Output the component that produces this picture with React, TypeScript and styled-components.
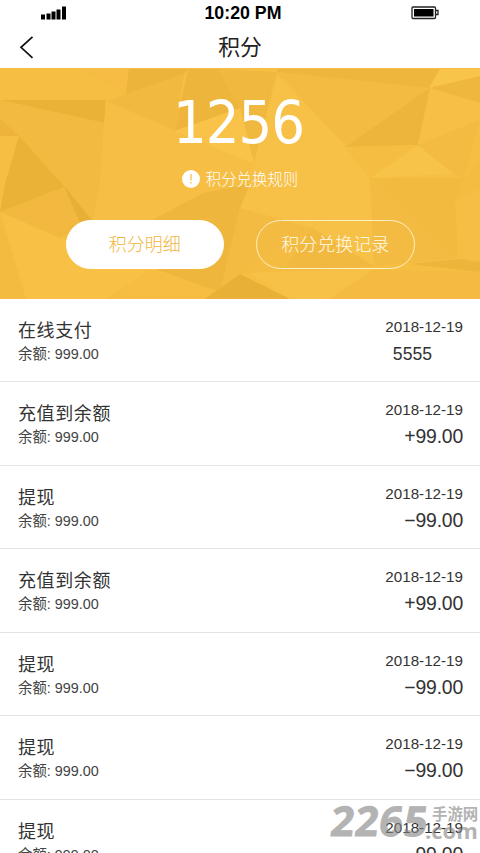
import React from "react";
import styled, { createGlobalStyle } from "styled-components";

const GlobalStyle = createGlobalStyle`
  * { box-sizing: border-box; }
  html, body { margin: 0; padding: 0; background: #fff; }
  body { overflow: hidden; }
  button { font: inherit; cursor: pointer; }
`;

const latin = '"Liberation Sans", "Noto Sans CJK SC", sans-serif';
const chinese = '"Noto Sans CJK SC", sans-serif';

const Screen = styled.div`
  position: relative;
  width: 480px;
  height: 853px;
  overflow: hidden;
  background: #fff;
  color: #333;
  font-family: ${latin};
`;

const StatusBar = styled.header`
  display: grid;
  grid-template-columns: 1fr auto 1fr;
  align-items: center;
  height: 26px;
  padding: 0 41px;
`;

const Clock = styled.span`
  font-size: 17.8px;
  font-weight: 700;
  line-height: 26px;
  color: #000;
  margin-left: 6px;
`;

const Battery = styled.svg`
  justify-self: end;
`;

const NavBar = styled.nav`
  display: grid;
  grid-template-columns: 60px 1fr 60px;
  align-items: center;
  height: 42px;
`;

const BackButton = styled.button`
  display: flex;
  padding: 0 0 0 19px;
  border: 0;
  background: none;
`;

const PageTitle = styled.h1`
  margin: -2px 0 0;
  text-align: center;
  font: 400 21.8px/42px ${chinese};
  color: #222;
`;

const Hero = styled.section`
  display: grid;
  height: 230.5px;
  overflow: hidden;
  background: #f6be43;
`;

const Facets = styled.svg`
  grid-area: 1 / 1;
  display: block;
`;

const HeroContent = styled.div`
  grid-area: 1 / 1;
  z-index: 1;
  display: flex;
  flex-direction: column;
  align-items: center;
  padding-top: 24px;
  color: #fff;
`;

const Points = styled.div`
  height: 64px;
  margin-right: 3px;
  font: 400 59px/62px "DejaVu Sans Condensed", "DejaVu Sans", sans-serif;
  font-stretch: condensed;
  letter-spacing: -1px;
`;

const RuleLink = styled.div`
  display: flex;
  align-items: center;
  gap: 6px;
  height: 22px;
  margin-top: 12px;
  font: 300 15.4px/22px ${chinese};
`;

const RuleText = styled.span`
  margin-top: -2px;
`;

const Tabs = styled.div`
  display: flex;
  gap: 32px;
  margin-top: 30px;
`;

const Tab = styled.button<{ $active?: boolean }>`
  width: 158.5px;
  height: 49px;
  padding: 0 0 2px;
  border: 1px solid ${(p) => (p.$active ? "#fff" : "#fff0c4")};
  border-radius: 25px;
  background: ${(p) => (p.$active ? "#fff" : "transparent")};
  color: ${(p) => (p.$active ? "#f2b63c" : "#fffae8")};
  font: 300 18px/45px ${chinese};
`;

const Records = styled.ul`
  margin: 0;
  padding: 0;
  list-style: none;
`;

const Record = styled.li`
  display: flex;
  justify-content: space-between;
  height: 83.6px;
  padding: 16px 17px 0 18px;
  border-bottom: 1px solid #e4e4e4;
`;

const Column = styled.div<{ $end?: boolean }>`
  display: flex;
  flex-direction: column;
  align-items: ${(p) => (p.$end ? "flex-end" : "flex-start")};
`;

const Name = styled.span`
  font: 400 18px/28px ${chinese};
  letter-spacing: 0.6px;
`;

const Balance = styled.span`
  font: 400 14.4px/22px ${latin};
  color: #444;
`;

const DateText = styled.time`
  font-size: 15.2px;
  line-height: 24px;
`;

const Amount = styled.span<{ $plain?: boolean }>`
  margin-top: 1px;
  margin-right: ${(p) => (p.$plain ? "31px" : "0")};
  font-size: ${(p) => (p.$plain ? "17.6px" : "19.4px")};
  line-height: ${(p) => (p.$plain ? "28px" : "27px")};
  letter-spacing: ${(p) => (p.$plain ? "0" : "-0.2px")};
`;

const Watermark = styled.div`
  position: absolute;
  left: 331px;
  top: 800px;
  display: flex;
  gap: 4px;
  height: 42px;
  color: #858585;
  opacity: 0.62;
`;

const WatermarkNumber = styled.span`
  width: 97px;
  font: 700 41px/40px "Open Sans", sans-serif;
  letter-spacing: 1px;
  transform: skewX(-7deg);
  -webkit-text-stroke: 1px #858585;
`;

const WatermarkSide = styled.div`
  display: flex;
  flex-direction: column;
`;

const WatermarkName = styled.span`
  font: 700 15.4px/18px ${chinese};
  margin-top: 4px;
  white-space: nowrap;
`;

const WatermarkDomain = styled.span`
  margin: -3px 0 0 -7px;
  font: 700 22px/22px "Open Sans", sans-serif;
`;

const facets: [string, string][] = [
  ["0,100 106,100 104,123", "#eab338"],
  ["0,100 104,123 100,184 93,222 19,136 0,118", "#f3ba41"],
  ["0,118 19,136 0,136", "#edb33a"],
  ["19,136 62,184 66,189 0,212 5,184", "#eab237"],
  ["0,212 66,186 93,222 60,238", "#f2b840"],
  ["64,186 93,222 82,227", "#e7af35"],
  ["0,212 60,238 158,270 110,299 26,299", "#f8c145"],
  ["0,212 26,299 0,299", "#f3bb40"],
  ["80,69 129,69 126,94", "#f6bc43"],
  ["129,69 188,69 184,74 126,94", "#ecb43a"],
  ["126,94 184,74 175,130 106,101", "#f2b941"],
  ["188,69 218,69 240,108 175,131", "#edb53c"],
  ["218,69 277,72 254,163 240,108", "#f1b83f"],
  ["175,131 240,108 254,163 235,158", "#f9c34a"],
  ["106,101 175,131 245,160 240,190 152,220 93,222 100,184", "#f6be44"],
  ["277,75 346,146 370,178 312,228 240,208 254,163", "#f7c046"],
  ["277,72 430,88 346,146", "#f4bb43"],
  ["277,69 440,69 429,88 277,72", "#efb63e"],
  ["430,88 418,145 345,147", "#edb53b"],
  ["440,69 480,69 480,77 429,88", "#f9c44a"],
  ["429,88 480,76 480,103", "#efb73e"],
  ["430,88 480,103 480,120 418,145", "#f7bf45"],
  ["345,147 418,145 370,178", "#f6bd43"],
  ["418,145 454,174 370,178", "#f8c349"],
  ["418,145 480,120 464,178 454,174", "#f4bb42"],
  ["152,220 204,193 250,184 240,208 220,292 158,270", "#eeb63c"],
  ["240,208 312,228 240,274 220,292", "#f3bb41"],
  ["370,178 312,228 374,266", "#f7c047"],
  ["370,178 458,258 374,266", "#f4bb42"],
  ["370,178 464,178 455,200 458,258", "#f3ba40"],
  ["464,178 480,162 480,190 456,200", "#f5bc42"],
  ["456,200 480,188 480,260 458,258", "#f6be44"],
  ["240,274 312,228 374,268 300,274", "#f5bc42"],
  ["312,228 374,266 284,270", "#f2b940"],
  ["150,270 220,292 205,299 105,299", "#f6bd42"],
  ["240,274 290,299 205,299", "#e9b037"],
  ["248,273 374,268 330,299 290,299", "#f7c046"],
  ["374,270 480,272 480,299 330,299", "#f4ba41"],
  ["410,264 460,259 480,262 480,272", "#edb53c"],
];

const records = [
  { name: "在线支付", amount: "5555", plain: true },
  { name: "充值到余额", amount: "+99.00" },
  { name: "提现", amount: "−99.00" },
  { name: "充值到余额", amount: "+99.00" },
  { name: "提现", amount: "−99.00" },
  { name: "提现", amount: "−99.00" },
  { name: "提现", amount: "−99.00" },
];

export default function App() {
  return (
    <Screen>
      <GlobalStyle />
      <StatusBar>
        <svg width="26" height="14" viewBox="0 0 26 14">
          <path d="M0 8.500h4v5H0zM5.500 7.500h4v6h-4zM10.500 5.500h4v8h-4zM15.500 3.500h4v10h-4zM21 .500h4v13h-4z" fill="#000" />
        </svg>
        <Clock>10:20 PM</Clock>
        <Battery width="28" height="14" viewBox="0 0 28 14">
          <rect x="1" y="1" width="23.500" height="11.500" rx="1" fill="#fff" stroke="#222" strokeWidth="1.300" />
          <rect x="3" y="3" width="19.500" height="7.500" fill="#000" />
          <path d="M25 4.500h2v4h-2" fill="none" stroke="#222" strokeWidth="1.300" />
        </Battery>
      </StatusBar>
      <NavBar>
        <BackButton aria-label="返回">
          <svg width="15" height="24" viewBox="0 0 15 24" fill="none" stroke="#111" strokeWidth="1.700">
            <path d="M13.500 1.800 2 12.300l11.500 10.500" />
          </svg>
        </BackButton>
        <PageTitle>积分</PageTitle>
      </NavBar>
      <Hero>
        <Facets width="480" height="231" viewBox="0 68 480 231">
          {facets.map(([points, fill]) => (
            <polygon key={points} points={points} fill={fill} />
          ))}
        </Facets>
        <HeroContent>
          <Points>1256</Points>
          <RuleLink>
            <svg width="18" height="18" viewBox="0 0 18 18">
              <circle cx="9" cy="9" r="9" fill="#fff" />
              <path d="M9 4v6.500M9 12v1.500" stroke="#f4bb42" strokeWidth="1.200" />
            </svg>
            <RuleText>积分兑换规则</RuleText>
          </RuleLink>
          <Tabs>
            <Tab $active>积分明细</Tab>
            <Tab>积分兑换记录</Tab>
          </Tabs>
        </HeroContent>
      </Hero>
      <Records>
        {records.map((record, i) => (
          <Record key={i}>
            <Column>
              <Name>{record.name}</Name>
              <Balance>余额: 999.00</Balance>
            </Column>
            <Column $end>
              <DateText>2018-12-19</DateText>
              <Amount $plain={record.plain}>{record.amount}</Amount>
            </Column>
          </Record>
        ))}
      </Records>
      <Watermark>
        <WatermarkNumber>2265</WatermarkNumber>
        <WatermarkSide>
          <WatermarkName>手游网</WatermarkName>
          <WatermarkDomain>.com</WatermarkDomain>
        </WatermarkSide>
      </Watermark>
    </Screen>
  );
}
